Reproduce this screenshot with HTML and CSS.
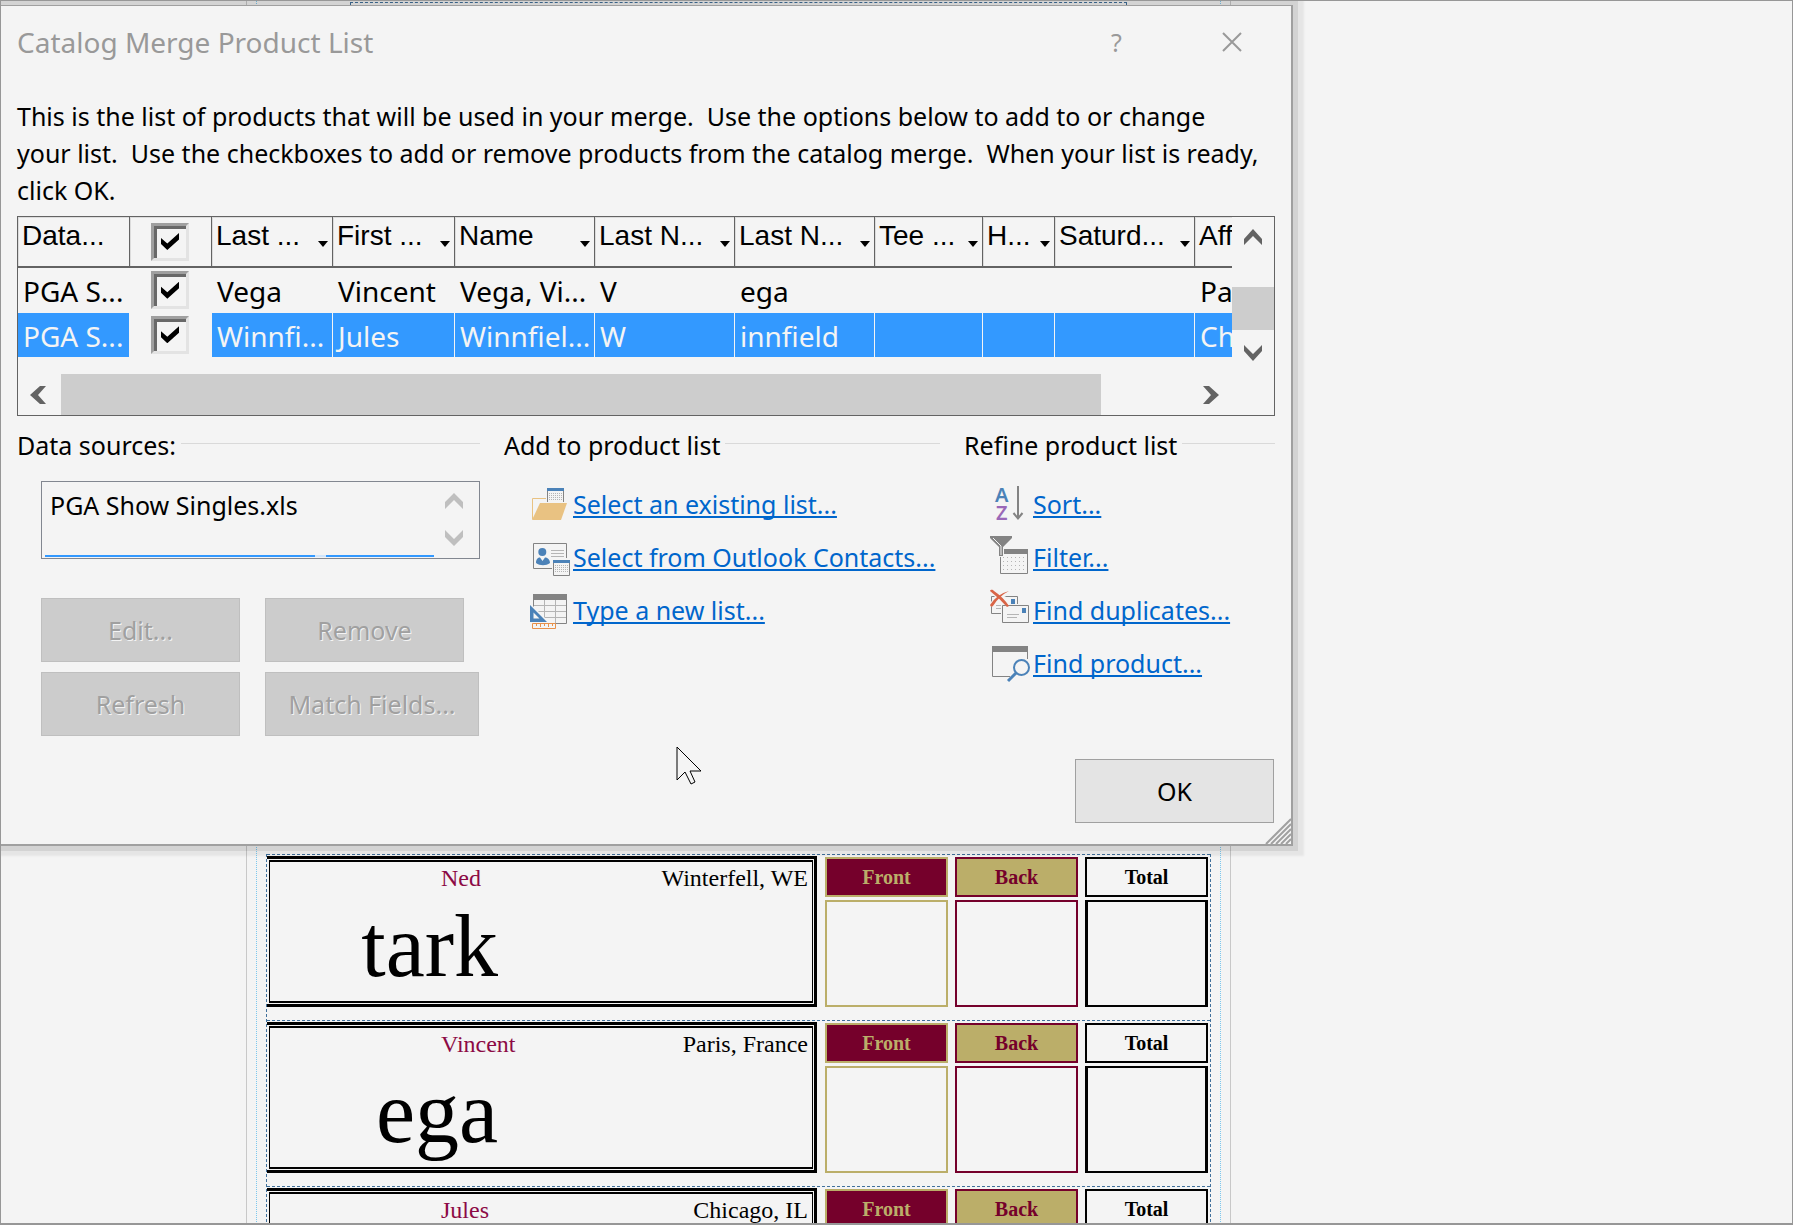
FILE: index.html
```html
<!DOCTYPE html>
<html lang="en">
<head>
  <meta charset="UTF-8" />
  <title>Catalog Merge Product List</title>
  <link rel="stylesheet" href="styles.css">
</head>
<body>
  <!-- Publication page -->
  <main class="page">
    <div class="page-inner">
      <div class="text-frame"></div>
      <div class="records">
        <section class="record">
          <div class="player">
            <div class="player-inner">
              <div class="player-head"><span class="first-name">Ned</span><span>Winterfell, WE</span></div>
              <div class="last-name">tark</div>
            </div>
          </div>
          <div class="score front"><div class="score-head">Front</div><div class="score-box"></div></div>
          <div class="score back"><div class="score-head">Back</div><div class="score-box"></div></div>
          <div class="score total"><div class="score-head">Total</div><div class="score-box"></div></div>
        </section>
        <section class="record">
          <div class="player">
            <div class="player-inner">
              <div class="player-head"><span class="first-name">Vincent</span><span>Paris, France</span></div>
              <div class="last-name">ega</div>
            </div>
          </div>
          <div class="score front"><div class="score-head">Front</div><div class="score-box"></div></div>
          <div class="score back"><div class="score-head">Back</div><div class="score-box"></div></div>
          <div class="score total"><div class="score-head">Total</div><div class="score-box"></div></div>
        </section>
        <section class="record">
          <div class="player">
            <div class="player-inner">
              <div class="player-head"><span class="first-name">Jules</span><span>Chicago, IL</span></div>
            </div>
          </div>
          <div class="score front"><div class="score-head">Front</div><div class="score-box"></div></div>
          <div class="score back"><div class="score-head">Back</div><div class="score-box"></div></div>
          <div class="score total"><div class="score-head">Total</div><div class="score-box"></div></div>
        </section>
      </div>
    </div>
  </main>

  <!-- Dialog -->
  <div class="dialog" role="dialog" aria-labelledby="dialogTitle">
    <header class="titlebar">
      <h1 id="dialogTitle">Catalog Merge Product List</h1>
      <button class="title-btn" aria-label="Help">?</button>
      <button class="title-btn" aria-label="Close">
        <svg width="20" height="20" viewBox="0 0 20 20"><path d="M1 1L19 19M19 1L1 19" fill="none" stroke="#999" stroke-width="2"/></svg>
      </button>
    </header>

    <p class="intro">This is the list of products that will be used in your merge.  Use the options below to add to or change<br>your list.  Use the checkboxes to add or remove products from the catalog merge.  When your list is ready,<br>click OK.</p>

    <div class="list">
      <div class="list-main">
        <table class="products">
          <colgroup>
            <col class="w-source"><col class="w-check"><col class="w-last"><col class="w-first"><col class="w-wide"><col class="w-wide"><col class="w-wide"><col class="w-tee"><col class="w-hole"><col class="w-wide"><col>
          </colgroup>
          <thead>
            <tr>
              <th><div class="th">Data...</div></th>
              <th class="check"><input type="checkbox" aria-label="Select all" checked></th>
              <th><div class="th">Last ...<button class="drop" aria-label="Sort or filter"></button></div></th>
              <th><div class="th">First ...<button class="drop" aria-label="Sort or filter"></button></div></th>
              <th><div class="th">Name<button class="drop" aria-label="Sort or filter"></button></div></th>
              <th><div class="th">Last N...<button class="drop" aria-label="Sort or filter"></button></div></th>
              <th><div class="th">Last N...<button class="drop" aria-label="Sort or filter"></button></div></th>
              <th><div class="th">Tee ...<button class="drop" aria-label="Sort or filter"></button></div></th>
              <th><div class="th">H...<button class="drop" aria-label="Sort or filter"></button></div></th>
              <th><div class="th">Saturd...<button class="drop" aria-label="Sort or filter"></button></div></th>
              <th><div class="th">Aff</div></th>
            </tr>
          </thead>
          <tbody>
            <tr>
              <td>PGA S...</td><td class="check"><input type="checkbox" aria-label="Vega" checked></td><td>Vega</td><td>Vincent</td><td>Vega, Vi...</td><td>V</td><td>ega</td><td></td><td></td><td></td><td>Pa</td>
            </tr>
            <tr class="selected">
              <td>PGA S...</td><td class="check"><input type="checkbox" aria-label="Winnfield" checked></td><td>Winnfi...</td><td>Jules</td><td>Winnfiel...</td><td>W</td><td>innfield</td><td></td><td></td><td></td><td>Ch</td>
            </tr>
          </tbody>
        </table>
        <div class="vscroll">
          <svg width="18" height="16" viewBox="0 0 18 16"><path d="M0 10L9 0L18 10V16L9 7L0 16Z" fill="#636363"/></svg>
          <div class="vthumb"></div>
          <svg width="18" height="16" viewBox="0 0 18 16"><path d="M0 6L9 16L18 6V0L9 9L0 0Z" fill="#636363"/></svg>
        </div>
      </div>
      <div class="hscroll">
        <svg width="16" height="18" viewBox="0 0 16 18"><path d="M10 0L0 9L10 18H16L8 9L16 0Z" fill="#636363"/></svg>
        <div class="hthumb"></div>
        <svg width="16" height="18" viewBox="0 0 16 18"><path d="M6 0L16 9L6 18H0L8 9L0 0Z" fill="#636363"/></svg>
      </div>
    </div>

    <div class="groups">
      <section class="group">
        <h2><label for="sources">Data sources:</label></h2>
        <div class="sources">
          <div class="listbox">
            <div class="listbox-row">
              <select id="sources" size="2"><option>PGA Show Singles.xls</option></select>
              <div class="listbox-arrows">
                <svg width="18" height="16" viewBox="0 0 18 16"><path d="M0 9L9 0L18 9V16L9 7L0 16Z" fill="#bfbfbf"/></svg>
                <svg width="18" height="16" viewBox="0 0 18 16"><path d="M0 7L9 16L18 7V0L9 9L0 0Z" fill="#bfbfbf"/></svg>
              </div>
            </div>
            <div class="next-row"></div>
          </div>
          <div class="source-buttons">
            <button class="btn" disabled>Edit...</button>
            <button class="btn" disabled>Remove</button>
            <button class="btn" disabled>Refresh</button>
            <button class="btn wide" disabled>Match Fields...</button>
          </div>
        </div>
      </section>

      <section class="group">
        <h2>Add to product list</h2>
        <ul class="links">
          <li>
            <svg width="44" height="44" viewBox="0 0 44 44">
              <path d="M18.500 19V8M34.500 8V19" stroke="#838383" fill="none"/>
              <path d="M18 5H35V8H18Z" fill="#4b82b8"/>
              <path d="M20 10.500H33M20 12.500H33M20 14.500H33M20 16.500H33" stroke="#b5b5b5" stroke-dasharray="1 1"/>
              <path d="M17 15.500H3.500V36" stroke="#e9c282" fill="none"/>
              <path d="M11 20H38L32 37H3Z" fill="#e9c282"/>
            </svg>
            <a href="#">Select an existing list...</a>
          </li>
          <li>
            <svg width="44" height="44" viewBox="0 0 44 44">
              <path d="M37.500 22V7.500H4.500V32.500H23" stroke="#838383" fill="none"/>
              <circle cx="13.300" cy="16" r="4" fill="#4b82b8"/>
              <path d="M7 27C7 23 9 21.500 11 21.500L13.500 25L16 21.500C19 21.500 21 24 21 27C17 30 11 30 7 27Z" fill="#4b82b8"/>
              <path d="M22 14.500H35M22 17.500H35M22 20.500H35" stroke="#b5b5b5"/>
              <path d="M24.500 27V39.500H40.500V27" stroke="#838383" fill="none"/>
              <path d="M24 24H41V27H24Z" fill="#4b82b8"/>
              <path d="M26 29.500H39M26 31.500H39M26 33.500H39M26 35.500H39" stroke="#b5b5b5" stroke-dasharray="1 1"/>
            </svg>
            <a href="#">Select from Outlook Contacts...</a>
          </li>
          <li>
            <svg width="44" height="44" viewBox="0 0 44 44">
              <path d="M15.500 11V34M26.500 11V34M5 16.500H37M5 22.500H37M5 28.500H37" stroke="#b5b5b5"/>
              <path d="M4.500 11V34.500H37.500V11" stroke="#838383" fill="none"/>
              <path d="M4 5H38V11H4Z" fill="#838383"/>
              <path d="M0 13V34H21Z" fill="#f4f4f4"/>
              <path d="M1 16L18 33H1ZM4.500 23.500V29.500H10.500Z" fill="#4b82b8" fill-rule="evenodd"/>
              <path d="M3.500 34.500H26.500V39.500H3.500Z" fill="#f4f4f4" stroke="#e8914a"/>
              <path d="M7.500 35V37M11.500 35V38M15.500 35V37M19.500 35V38M23.500 35V37" stroke="#e8914a"/>
            </svg>
            <a href="#">Type a new list...</a>
          </li>
        </ul>
      </section>

      <section class="group">
        <h2>Refine product list</h2>
        <ul class="links">
          <li>
            <svg width="44" height="44" viewBox="0 0 44 44">
              <text x="6" y="19" class="sort-a">A</text>
              <text x="7" y="37" class="sort-z">Z</text>
              <path d="M29 3V36M24.500 30L29 35.500L33.500 30" stroke="#838383" stroke-width="2" fill="none"/>
            </svg>
            <a href="#">Sort...</a>
          </li>
          <li>
            <svg width="44" height="44" viewBox="0 0 44 44">
              <path d="M15 13H39V18H15Z" fill="#838383"/>
              <path d="M11.500 21V37.500H38.500V18" stroke="#838383" fill="none"/>
              <path d="M14 21.500H36M14 25.500H36M14 29.500H36M14 33.500H36" stroke="#b5b5b5" stroke-dasharray="1 3"/>
              <path d="M1 0H23V2L14 11V20H10V11L1 2Z" fill="#838383"/>
              <path d="M4 2L12 10V19" stroke="#f4f4f4" fill="none"/>
            </svg>
            <a href="#">Filter...</a>
          </li>
          <li>
            <svg width="44" height="44" viewBox="0 0 44 44">
              <path d="M2.500 7.500H28.500V24.500H2.500Z" stroke="#838383" fill="none"/>
              <path d="M7 16.500H12M7 19.500H12" stroke="#b5b5b5"/>
              <path d="M12 15H41V35H12Z" fill="#f4f4f4"/>
              <path d="M13.500 16.500H39.500V33.500H13.500Z" stroke="#838383" fill="none"/>
              <path d="M33 19H37V24H33Z" fill="#4b82b8"/>
              <path d="M18 25.500H30M18 28.500H28" stroke="#b5b5b5"/>
              <path d="M2 2Q12 8 19 15M20 3Q8 8 2 17" stroke="#f4f4f4" stroke-width="5" fill="none"/>
              <path d="M22 10H26V15H22Z" fill="#4b82b8"/>
              <path d="M1 2C2 0 4 1 5 2Q14 8 20 17L18 18Q10 9 1 2Z" fill="#d96547"/>
              <path d="M20 2Q10 7 4 17Q2 19 1 16Q8 5 20 2Z" fill="#d96547"/>
            </svg>
            <a href="#">Find duplicates...</a>
          </li>
          <li>
            <svg width="44" height="44" viewBox="0 0 44 44">
              <path d="M38.500 17V10M3.500 10V34.500H21" stroke="#838383" fill="none"/>
              <path d="M3 4H39V10H3Z" fill="#838383"/>
              <circle cx="32.500" cy="25.500" r="7.500" stroke="#4b82b8" stroke-width="2" fill="#f4f4f4"/>
              <path d="M27 31L19 39" stroke="#4b82b8" stroke-width="3"/>
            </svg>
            <a href="#">Find product...</a>
          </li>
        </ul>
      </section>
    </div>

    <footer class="dialog-footer">
      <button class="btn ok">OK</button>
    </footer>
    <svg class="grip" width="26" height="26" viewBox="0 0 26 26"><path d="M1 26L26 1M6 26L26 6M11 26L26 11M16 26L26 16M21 26L26 21" stroke="#a0a0a0" stroke-width="2"/></svg>
  </div>

  <svg class="cursor" width="26" height="40" viewBox="0 0 26 40"><path d="M1 1V34L9 26L15 38L19 36L14 25H25Z" fill="#f4f4f4" stroke="#000"/></svg>
</body>
</html>
```

FILE: styles.css
```css
* {
  box-sizing: border-box;
}
body {
  margin: 0;
  height: 100vh;
  overflow: hidden;
  position: relative;
  background: #f4f4f4;
  border: 1px solid #979797;
  border-bottom-width: 2px;
  font-family: "Noto Sans", sans-serif;
  font-size: 25px;
  line-height: 37px;
  color: #000;
}
button, input, select {
  font: inherit;
  color: inherit;
}
svg {
  display: block;
  flex: none;
}

/* publication page */
.page {
  max-width: 985px;
  margin-left: 245px;
  padding: 0 9px;
  border-left: 1px solid #c8c8c8;
  border-right: 1px solid #c8c8c8;
}
.page-inner {
  padding: 1px 9px 0;
  border-left: 1px dotted #7cc8ee;
  border-right: 1px dotted #7cc8ee;
}
.text-frame {
  height: 840px;
  margin: 0 84px 12px;
  border: 1px dashed #41719c;
  border-bottom: none;
}
.records {
  border-left: 1px dashed #41719c;
  border-right: 1px dashed #41719c;
}
.record {
  display: grid;
  grid-template-columns: 1fr 123px 123px 123px;
  gap: 7px;
  height: 166px;
  padding: 1px 2px 13px 0;
  border-top: 1px dashed #41719c;
  font-family: "Liberation Serif", serif;
}
.player {
  margin-right: 1px;
  padding: 1px 1px 1px 2px;
  border: 3px solid #000;
  border-left: none;
}
.player-inner {
  height: 100%;
  border: 1px solid #000;
  border-top-width: 2px;
  border-bottom-width: 2px;
}
.player-head {
  display: flex;
  justify-content: space-between;
  padding: 0 4px 0 171px;
  font-size: 24px;
  line-height: 33px;
}
.first-name {
  color: #8c0a45;
}
.last-name {
  width: 228px;
  font-size: 88px;
  line-height: 104px;
  text-align: right;
}
.score {
  display: flex;
  flex-direction: column;
  gap: 3px;
  padding-top: 1px;
}
.score-head {
  height: 40px;
  border: 2px solid #000;
  font-size: 20px;
  font-weight: bold;
  line-height: 36px;
  text-align: center;
}
.score-box {
  flex: 1;
  border: 2px solid #000;
}
.front .score-head {
  background: #75002b;
  border-color: #bbae69;
  color: #bbae69;
}
.front .score-box {
  border-color: #bbae69;
}
.back .score-head {
  background: #bbae69;
  border-color: #75002b;
  color: #75002b;
}
.back .score-box {
  border-color: #75002b;
}
.total .score-box {
  border-left-width: 3px;
  border-right-width: 3px;
}

/* dialog window */
.dialog {
  position: absolute;
  top: 4px;
  left: 0;
  width: min(1292px, 100%);
  padding: 0 16px 21px;
  background: #f4f4f4;
  border: solid #a0a0a0;
  border-width: 1px 2px 2px 0;
  box-shadow: 0 0 0 5px rgba(0, 0, 0, 0.08), 2px 1px 2px 9px rgba(0, 0, 0, 0.06);
}
.titlebar {
  display: flex;
  align-items: center;
  height: 72px;
  color: #999;
}
h1 {
  flex: 1;
  margin: 0;
  font-size: 28px;
  font-weight: normal;
}
.title-btn {
  display: flex;
  align-items: center;
  justify-content: center;
  width: 115px;
  height: 72px;
  padding: 0;
  border: none;
  background: none;
}
.title-btn:last-child {
  margin-right: -14px;
}
.intro {
  margin: 20px 0 7px;
  white-space: pre-wrap;
}

/* product table */
.list {
  height: 200px;
  border: 1px solid #636363;
}
.list-main {
  display: flex;
  height: 157px;
}
.products {
  flex: 1;
  width: 100%;
  height: 140px;
  table-layout: fixed;
  border-collapse: separate;
  border-spacing: 0;
}
.w-source { width: 112px; }
.w-check { width: 82px; }
.w-last { width: 121px; }
.w-first { width: 122px; }
.w-wide { width: 140px; }
.w-tee { width: 108px; }
.w-hole { width: 72px; }
.products th, .products td {
  padding: 0 0 0 5px;
  overflow: hidden;
  white-space: nowrap;
  text-align: left;
  font-weight: normal;
}
.products th {
  height: 51px;
  padding-left: 4px;
  border-right: 1px solid #636363;
  border-bottom: 2px solid #636363;
  box-shadow: inset 1px 1px 0 #dcdcdc;
  font-family: "Liberation Sans", sans-serif;
  font-size: 28px;
  vertical-align: top;
}
.products th:last-child {
  border-right: none;
}
.th {
  display: flex;
  justify-content: space-between;
  align-items: flex-end;
}
.drop {
  width: 10px;
  height: 6px;
  margin: 0 4px 7px 0;
  padding: 0;
  border: none;
  background: #000;
  clip-path: polygon(0 0, 100% 0, 50% 100%);
}
.products td {
  height: 44px;
  padding-top: 3px;
  font-size: 28px;
  line-height: 41px;
}
.products .selected td {
  background: #3399ff;
  border-right: 1px solid #f4f4f4;
  color: #f4f4f4;
}
.products .selected td:last-child {
  border-right: none;
}
.products .check, .products .selected .check {
  padding: 0 4px 0 0;
  background: none;
  text-align: center;
  vertical-align: middle;
}
.check input {
  appearance: none;
  display: grid;
  place-content: center;
  width: 38px;
  height: 38px;
  margin: 0 0 0 21px;
  border: 3px solid;
  border-color: #a0a0a0 #e3e3e3 #e3e3e3 #a0a0a0;
  box-shadow: inset 3px 3px 0 #696969;
  color: #000;
}
.check input:checked::before {
  content: "";
  width: 18px;
  height: 17px;
  background: #000;
  clip-path: polygon(0 30%, 35% 62%, 100% 0, 100% 38%, 35% 100%, 0 65%);
}
.vscroll {
  display: flex;
  flex: none;
  flex-direction: column;
  align-items: center;
  justify-content: space-between;
  width: 42px;
  padding: 12px 0 13px;
}
.vthumb {
  width: 100%;
  height: 43px;
  margin-top: 26px;
  background: #cdcdcd;
}
.hscroll {
  display: flex;
  align-items: center;
  gap: 15px;
  height: 41px;
  padding: 0 55px 0 12px;
}
.hthumb {
  flex: 1;
  height: 100%;
  margin-right: 87px;
  background: #cdcdcd;
}

/* groups */
.groups {
  display: grid;
  grid-template-columns: minmax(0, 463fr) minmax(0, 436fr) minmax(0, 311fr);
  gap: 24px;
  margin-top: 11px;
}
h2 {
  display: flex;
  gap: 5px;
  margin: 0;
  font-size: inherit;
  font-weight: normal;
}
h2::after {
  content: "";
  flex: 1;
  height: 16px;
  border-bottom: 1px solid #d9d9d9;
}
.sources {
  padding: 17px 0 0 24px;
}
.listbox {
  height: 78px;
  border: 1px solid #828790;
}
.listbox-row {
  display: flex;
  justify-content: space-between;
  height: 73px;
}
.listbox select {
  flex: 1;
  padding: 6px 0 0 7px;
  border: none;
  outline: none;
  background: none;
  overflow: hidden;
}
.listbox option {
  padding: 0 1px;
}
.listbox-arrows {
  display: flex;
  flex-direction: column;
  justify-content: space-between;
  padding: 11px 16px 9px;
}
.next-row {
  height: 2px;
  margin: 0 45px 0 3px;
  background: linear-gradient(to right, #3399ff 270px, #cfe5fc 270px, #cfe5fc 281px, #3399ff 281px);
}
.source-buttons {
  display: grid;
  grid-template-columns: 199px 214px;
  gap: 10px 25px;
  margin-top: 39px;
}
.btn {
  width: 199px;
  height: 64px;
  padding: 0;
  border: 1px solid #a0a0a0;
  background: #e4e4e4;
}
.btn.wide {
  width: 100%;
}
.btn:disabled {
  border-color: #bfbfbf;
  background: #cccccc;
  color: #a0a0a0;
  text-shadow: 1px 1px 0 #f4f4f4;
}
.links {
  margin: 0;
  padding: 14px 0 0 25px;
  list-style: none;
}
.links li {
  display: flex;
  align-items: center;
  height: 53px;
  white-space: nowrap;
}
.links a {
  color: #0066cc;
  text-decoration-thickness: 2px;
  text-underline-offset: 2px;
  text-decoration-skip-ink: none;
}
.sort-a, .sort-z {
  font-size: 20px;
  font-weight: 600;
  font-family: "Noto Sans", sans-serif;
  fill: #4b82b8;
}
.sort-z {
  fill: #9a68b8;
}
.dialog-footer {
  display: flex;
  justify-content: flex-end;
  margin-top: 23px;
  padding-right: 1px;
}
.grip {
  position: absolute;
  right: 0;
  bottom: 0;
}
.cursor {
  position: absolute;
  left: 675px;
  top: 745px;
}
```
